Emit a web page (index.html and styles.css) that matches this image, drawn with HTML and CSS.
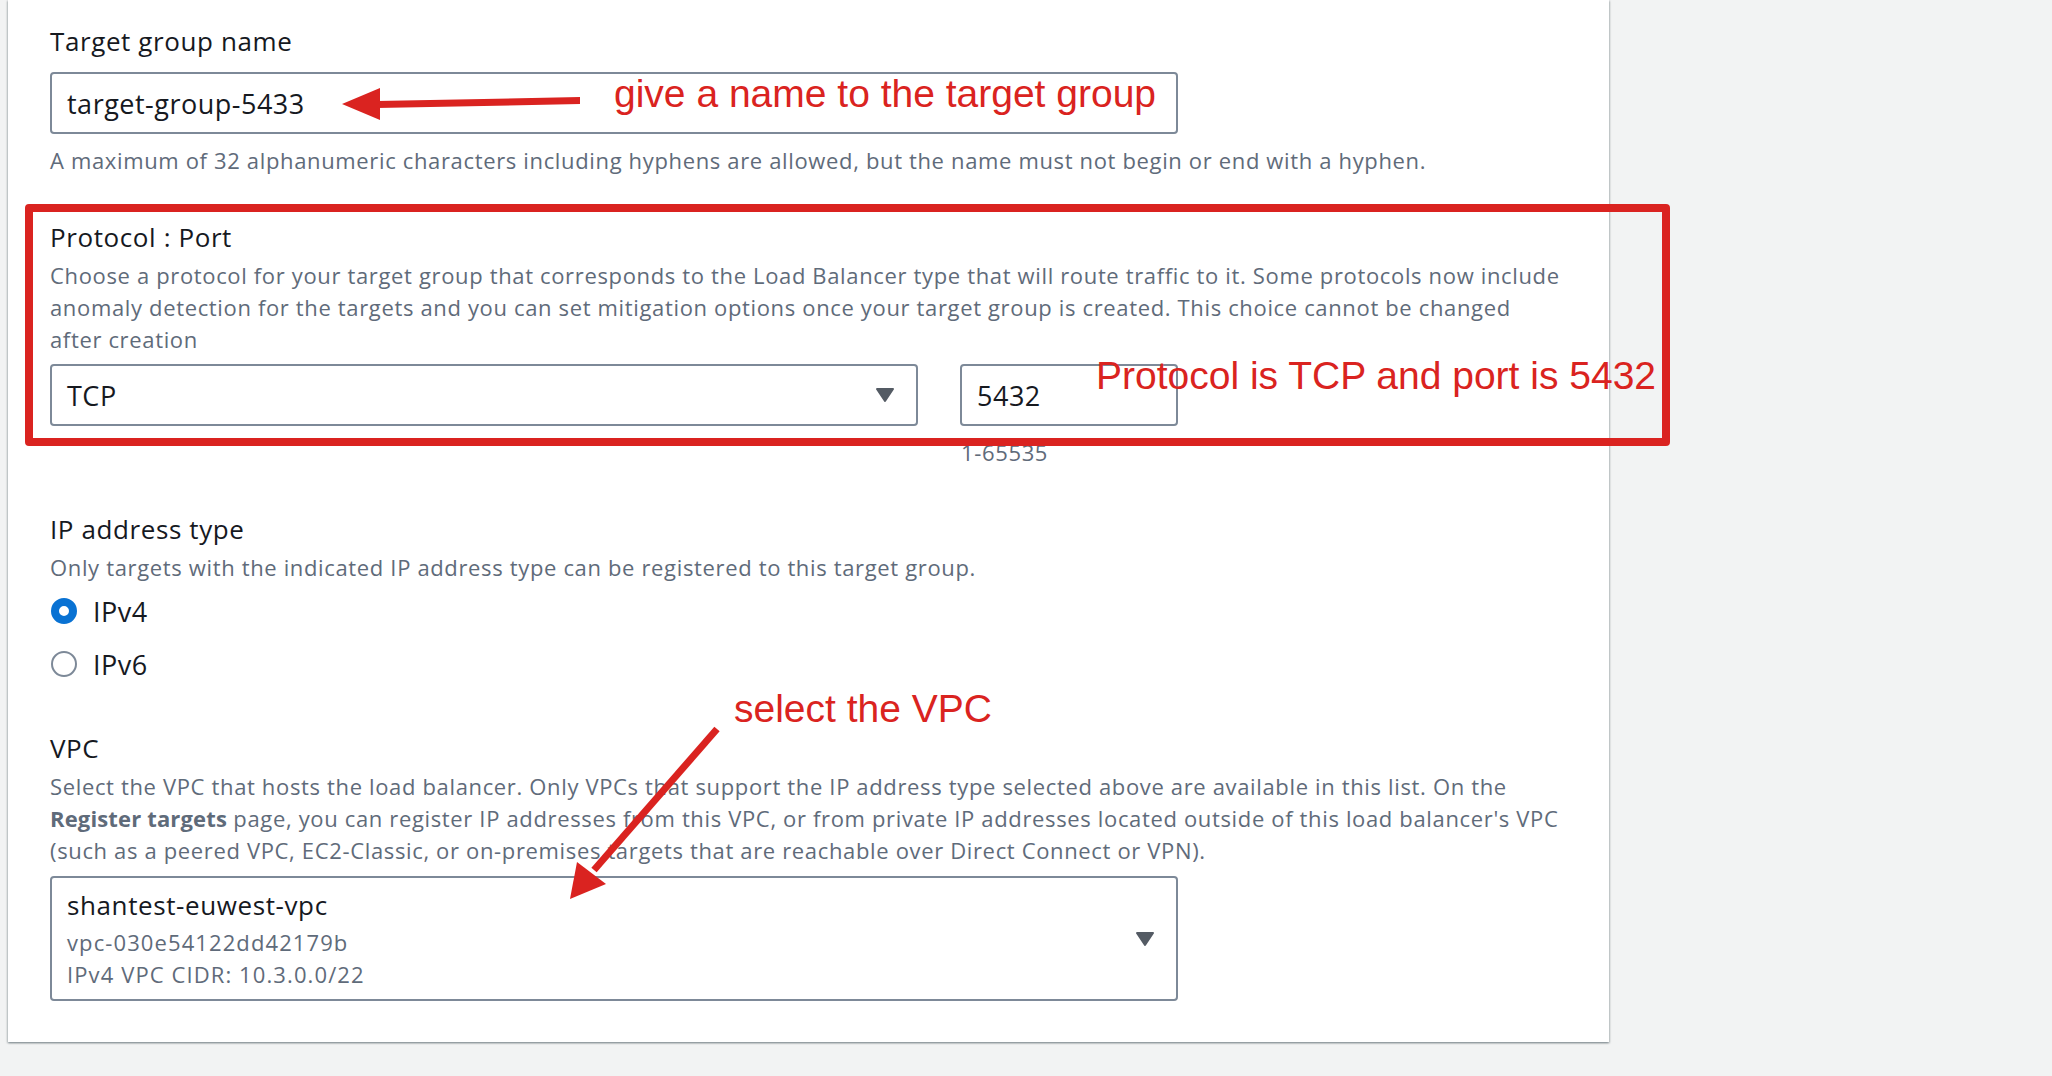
FILE: index.html
```html
<!DOCTYPE html>
<html lang="en">
  <head>
    <meta charset="UTF-8" />
    <title>Target group - Protocol and VPC</title>
    <link rel="stylesheet" href="styles.css">
  </head>
  <body>
    <div class="page">
      <div class="card">
        <div class="field first">
          <label class="label">Target group name</label>
          <div class="input wide">target-group-5433</div>
          <p class="hint">A maximum of 32 alphanumeric characters including hyphens are allowed, but the name must not begin or end with a hyphen.</p>
        </div>

        <div class="field">
          <label class="label">Protocol : Port</label>
          <p class="desc">Choose a protocol for your target group that corresponds to the Load Balancer type that will route traffic to it. Some protocols now include<br>anomaly detection for the targets and you can set mitigation options once your target group is created. This choice cannot be changed<br>after creation</p>
          <div class="row">
            <div class="select protocol">
              <span>TCP</span>
              <svg class="caret" width="20" height="16" viewBox="0 0 20 16"><polygon points="2,2 18,2 10,14" /></svg>
            </div>
            <div class="port">
              <div class="input">5432</div>
              <p class="hint">1-65535</p>
            </div>
          </div>
        </div>

        <div class="field">
          <label class="label">IP address type</label>
          <p class="desc">Only targets with the indicated IP address type can be registered to this target group.</p>
          <div class="radios">
            <div class="radio-row"><span class="radio checked"></span>IPv4</div>
            <div class="radio-row"><span class="radio"></span>IPv6</div>
          </div>
        </div>

        <div class="field vpc">
          <label class="label">VPC</label>
          <p class="desc">Select the VPC that hosts the load balancer. Only VPCs that support the IP address type selected above are available in this list. On the<br><b>Register targets</b> page, you can register IP addresses from this VPC, or from private IP addresses located outside of this load balancer's VPC<br>(such as a peered VPC, EC2-Classic, or on-premises targets that are reachable over Direct Connect or VPN).</p>
          <div class="select vpc-select">
            <div class="vpc-lines">
              <span class="vpc-name">shantest-euwest-vpc</span>
              <span class="vpc-sub">vpc-030e54122dd42179b</span>
              <span class="vpc-sub">IPv4 VPC CIDR: 10.3.0.0/22</span>
            </div>
            <svg class="caret" width="20" height="16" viewBox="0 0 20 16"><polygon points="2,2 18,2 10,14" /></svg>
          </div>
        </div>
      </div>

      <!-- annotations drawn over the form -->
      <div class="mark-box"></div>
      <span class="note note-name">give a name to the target group</span>
      <span class="note note-port">Protocol is TCP and port is 5432</span>
      <span class="note note-vpc">select the VPC</span>
      <svg class="arrows" width="2052" height="1076" viewBox="0 0 2052 1076">
        <polygon points="342,104 380,88 380,120" />
        <polygon points="377,101 580,97 580,104 377,108" />
        <line x1="717" y1="729" x2="594" y2="870" />
        <polygon points="570,899 577,862 606,884" />
      </svg>
    </div>
  </body>
</html>
```

FILE: styles.css
```css
* {
  box-sizing: border-box;
  margin: 0;
  padding: 0;
}
body {
  background-color: #f2f3f3;
  font-family: "Open Sans", sans-serif;
  color: #16191f;
  overflow: hidden;
}
.page {
  position: relative;
  width: 2052px;
  height: 1076px;
}
.card {
  margin-left: 8px;
  width: 1601px;
  padding: 25px 0 41px 42px;
  background-color: #ffffff;
  box-shadow: 0 1px 2px 0 rgba(0, 28, 36, 0.35), 1px 1px 2px 0 rgba(0, 28, 36, 0.15),
    -1px 1px 2px 0 rgba(0, 28, 36, 0.15);
}
.field {
  margin-top: 45px;
}
.field.first {
  margin-top: 0;
}
.field.vpc {
  margin-top: 48px;
}
.label {
  display: block;
  font-size: 26px;
  line-height: 32px;
  font-weight: 500;
  letter-spacing: 0.6px;
}
.desc,
.hint {
  font-size: 22px;
  line-height: 32px;
  letter-spacing: 0.65px;
  color: #5f6b7a;
  white-space: nowrap;
}
.desc {
  margin-top: 6px;
}
.desc b {
  color: #5f6b7a;
  font-weight: 700;
  letter-spacing: 0.15px;
}
.hint {
  margin-top: 10px;
}
.input,
.select {
  border: 2px solid #7d8998;
  border-radius: 4px;
  background-color: #ffffff;
  font-size: 27px;
  letter-spacing: 0.5px;
  display: flex;
  align-items: center;
}
.input {
  height: 62px;
  padding: 0 15px;
}
.first .label {
  margin-bottom: 15px;
}
.wide {
  width: 1128px;
}
.row {
  display: flex;
  gap: 42px;
  margin-top: 9px;
}
.select {
  justify-content: space-between;
  padding: 0 21px 0 15px;
}
.protocol {
  width: 868px;
  height: 62px;
}
.port {
  width: 218px;
}
.port .hint {
  padding-left: 1px;
}
.caret {
  fill: #545b64;
  stroke: #545b64;
  stroke-width: 2;
  stroke-linejoin: round;
}
.radios {
  margin-top: 8px;
  display: flex;
  flex-direction: column;
  gap: 13px;
}
.radio-row {
  height: 40px;
  display: flex;
  align-items: center;
  gap: 16px;
  font-size: 27px;
  letter-spacing: 0.5px;
}
.radio {
  width: 26px;
  height: 26px;
  border-radius: 50%;
  border: 2.5px solid #7d8998;
  margin-left: 1px;
}
.radio.checked {
  border: 8px solid #0972d3;
}
.vpc-select {
  width: 1128px;
  height: 125px;
  margin-top: 10px;
}
.vpc-lines {
  display: flex;
  flex-direction: column;
  padding-top: 2px;
}
.vpc-name {
  font-size: 26px;
  line-height: 32px;
  letter-spacing: 0.6px;
  margin-bottom: 5px;
}
.vpc-sub {
  font-size: 22px;
  line-height: 32px;
  letter-spacing: 1.1px;
  color: #5f6b7a;
}

.mark-box {
  position: absolute;
  left: 25px;
  top: 204px;
  width: 1645px;
  height: 242px;
  border: 8px solid #da2320;
  border-radius: 4px;
}
.note {
  position: absolute;
  font-family: "Liberation Sans", Arial, sans-serif;
  font-size: 39px;
  line-height: 39px;
  color: #da2320;
  white-space: nowrap;
}
.note-name {
  left: 614px;
  top: 74px;
}
.note-port {
  left: 1096px;
  top: 356px;
}
.note-vpc {
  left: 734px;
  top: 689px;
}
.arrows {
  position: absolute;
  left: 0;
  top: 0;
  pointer-events: none;
  fill: #da2320;
}
.arrows line {
  stroke: #da2320;
  stroke-width: 7;
}
```
